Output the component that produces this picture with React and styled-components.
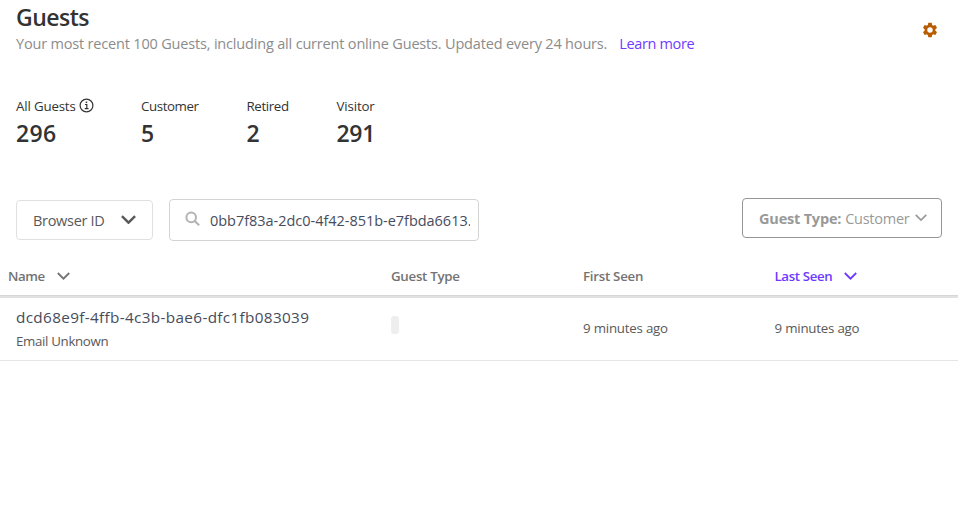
import React from "react";
import styled, { createGlobalStyle } from "styled-components";

const GlobalStyle = createGlobalStyle`
  * { box-sizing: border-box; }
  body {
    margin: 0;
    background: #fff;
    color: #333;
    font-family: "Open Sans", "Noto Sans", sans-serif;
    font-size: 13.3px;
    line-height: 20px;
  }
`;

const Page = styled.main`
  width: 100%;
  min-height: 518px;
  overflow: hidden;
`;

const Header = styled.header`
  display: flex;
  justify-content: space-between;
  padding: 0 19px 0 16px;
  height: 96px;
`;

const Title = styled.h1`
  margin: 0;
  font-size: 23px;
  line-height: 35px;
  font-weight: 600;
  letter-spacing: -0.5px;
`;

const Subtitle = styled.p`
  margin: 0;
  font-size: 14.5px;
  line-height: 18px;
  letter-spacing: -0.18px;
  color: #8c8c8c;
  white-space: nowrap;
`;

const Link = styled.a`
  margin-left: 12px;
  color: #6e3aff;
  letter-spacing: -0.35px;
`;

const SettingsButton = styled.button`
  display: flex;
  align-self: flex-start;
  margin-top: 21px;
  padding: 0;
  border: 0;
  background: none;
  color: #b85c00;
`;

const Stats = styled.section`
  display: grid;
  grid-template-columns: 125px 105.5px 90px auto;
  padding-left: 16px;
  height: 102px;
`;

const StatLabel = styled.div`
  display: flex;
  align-items: center;
  gap: 3px;
  letter-spacing: ${(p) => p.$tracking}px;

  svg { margin-top: -1px; }
`;

const StatValue = styled.div`
  margin-top: 1px;
  font-size: 23px;
  line-height: 32px;
  font-weight: 600;
  letter-spacing: ${(p) => p.$tracking}px;
`;

const Toolbar = styled.section`
  display: flex;
  align-items: flex-start;
  gap: 16px;
  height: 59px;
  padding: 0 16px;
  font-size: 14.5px;
`;

const FieldSelect = styled.div`
  display: flex;
  align-items: center;
  justify-content: space-between;
  width: 137px;
  height: 40px;
  margin-top: 2px;
  padding: 1px 16px 0 16px;
  border: 1px solid #e0e0e0;
  border-radius: 4px;
  color: #595959;
  letter-spacing: -0.3px;

  svg { margin-top: -2px; }
`;

const SearchBox = styled.div`
  display: flex;
  align-items: center;
  width: 310px;
  height: 42px;
  margin-top: 1px;
  padding: 1px 8px 0 15px;
  border: 1px solid #d4d4d4;
  border-radius: 4px;
  color: #474c5c;

  svg { margin-top: -3px; }
`;

const SearchValue = styled.span`
  flex: 1;
  margin-left: 9px;
  overflow: hidden;
  white-space: nowrap;
  letter-spacing: -0.03px;
`;

const TypeFilter = styled.div`
  display: flex;
  align-items: center;
  width: 200px;
  height: 40px;
  margin-left: auto;
  padding: 1px 15px 0 16px;
  border: 1px solid #959595;
  border-radius: 4px;
  color: #999;
  letter-spacing: -0.25px;
  white-space: nowrap;

  strong { margin-right: 4px; letter-spacing: -0.2px; }
  svg { flex: none; margin: -1px 0 0 5px; }
`;

const TableRow = styled.div`
  display: grid;
  grid-template-columns: 391px 192px 191.5px 1fr;
`;

const HeadRow = styled(TableRow)`
  height: 41px;
  padding-top: 9px;
  border-bottom: 2px solid #e1e1e1;
  box-shadow: inset 0 -1px #d6d6d6;
`;

const HeadCell = styled.div`
  display: flex;
  align-items: center;
  gap: 12px;
  height: 20px;
  padding-left: ${(p) => (p.$first ? 8 : 0)}px;
  font-weight: 600;
  letter-spacing: ${(p) => p.$tracking}px;
  color: ${(p) => (p.$active ? "#6e3aff" : "#737373")};
`;

const BodyRow = styled(TableRow)`
  height: 63px;
  border-bottom: 1px solid #e6e6e6;
  color: #595959;
`;

const NameCell = styled.div`
  padding: 9px 0 0 16px;
`;

const GuestId = styled.div`
  font-size: 15.3px;
  line-height: 20px;
  letter-spacing: 0.34px;
  color: #474c5c;
`;

const Email = styled.div`
  margin-top: 4px;
  letter-spacing: -0.34px;
`;

const Tag = styled.span`
  display: block;
  width: 8px;
  height: 18px;
  margin-top: 18px;
  border-radius: 3px;
  background: #eee;
`;

const TimeCell = styled.div`
  padding-top: 20px;
  letter-spacing: -0.21px;
`;

function Chevron({ width = 13, stroke = 1.8 }) {
  return (
    <svg width={width} height={(width * 8) / 13} viewBox="0 0 13 8" fill="none">
      <path d="M.8 1 6.5 6.7 12.2 1" stroke="currentColor" strokeWidth={stroke} />
    </svg>
  );
}

function InfoIcon() {
  return (
    <svg width="15" height="15" viewBox="0 0 15 15" fill="none">
      <circle cx="7.5" cy="7.5" r="6.4" stroke="#333" strokeWidth="1.2" />
      <path d="M6 6.5h1.8v4M5.7 10.6h3.8" stroke="#333" strokeWidth="1.2" />
      <path d="M6.7 3.6h1.5v1.5H6.7z" fill="#333" />
    </svg>
  );
}

function SearchIcon() {
  return (
    <svg width="16" height="16" viewBox="0 0 16 16" fill="none" stroke="#b3b3b3">
      <circle cx="6.2" cy="6.4" r="4.8" strokeWidth="2" />
      <path d="m9.7 10 4.4 4.3" strokeWidth="2.2" />
    </svg>
  );
}

function GearIcon() {
  return (
    <svg width="18" height="18" viewBox="0 0 24 24" fill="currentColor">
      <path d="M19.14 12.94c.04-.3.06-.61.06-.94 0-.32-.02-.64-.07-.94l2.03-1.58a.49.49 0 0 0 .12-.61l-1.92-3.32a.488.488 0 0 0-.59-.22l-2.39.96c-.5-.38-1.03-.7-1.62-.94l-.36-2.54a.484.484 0 0 0-.48-.41h-3.84c-.24 0-.43.17-.47.41l-.36 2.54c-.59.24-1.13.57-1.62.94l-2.39-.96c-.22-.08-.47 0-.59.22L2.74 8.87c-.12.21-.08.47.12.61l2.03 1.58c-.05.3-.09.63-.09.94s.02.64.07.94l-2.03 1.58a.49.49 0 0 0-.12.61l1.92 3.32c.12.22.37.29.59.22l2.39-.96c.5.38 1.03.7 1.62.94l.36 2.54c.05.24.24.41.48.41h3.84c.24 0 .44-.17.47-.41l.36-2.54c.59-.24 1.13-.56 1.62-.94l2.39.96c.22.08.47 0 .59-.22l1.92-3.32c.12-.22.07-.47-.12-.61l-2.01-1.58zM12 15.6A3.6 3.6 0 1 1 12 8.4a3.6 3.6 0 0 1 0 7.2z" />
    </svg>
  );
}

const stats = [
  { label: "All Guests", value: "296", info: true, tracking: -0.17, valueTracking: 0.35 },
  { label: "Customer", value: "5", tracking: -0.4, valueTracking: 0 },
  { label: "Retired", value: "2", tracking: -0.37, valueTracking: 0 },
  { label: "Visitor", value: "291", tracking: -0.15, valueTracking: -0.3 },
];

export default function App() {
  return (
    <Page>
      <GlobalStyle />
      <Header>
        <div>
          <Title>Guests</Title>
          <Subtitle>
            Your most recent 100 Guests, including all current online Guests. Updated every 24 hours.
            <Link>Learn more</Link>
          </Subtitle>
        </div>
        <SettingsButton aria-label="Settings"><GearIcon /></SettingsButton>
      </Header>
      <Stats>
        {stats.map((s) => (
          <div key={s.label}>
            <StatLabel $tracking={s.tracking}>{s.label}{s.info && <InfoIcon />}</StatLabel>
            <StatValue $tracking={s.valueTracking}>{s.value}</StatValue>
          </div>
        ))}
      </Stats>
      <Toolbar>
        <FieldSelect>Browser ID<Chevron width={15} stroke={2.1} /></FieldSelect>
        <SearchBox><SearchIcon /><SearchValue>0bb7f83a-2dc0-4f42-851b-e7fbda6613.</SearchValue></SearchBox>
        <TypeFilter><strong>Guest Type:</strong>Customer<Chevron width={12} /></TypeFilter>
      </Toolbar>
      <HeadRow>
        <HeadCell $first $tracking={-0.4}>Name<Chevron /></HeadCell>
        <HeadCell $tracking={-0.28}>Guest Type</HeadCell>
        <HeadCell $tracking={-0.27}>First Seen</HeadCell>
        <HeadCell $active $tracking={-0.38}>Last Seen<Chevron /></HeadCell>
      </HeadRow>
      <BodyRow>
        <NameCell>
          <GuestId>dcd68e9f-4ffb-4c3b-bae6-dfc1fb083039</GuestId>
          <Email>Email Unknown</Email>
        </NameCell>
        <Tag />
        <TimeCell>9 minutes ago</TimeCell>
        <TimeCell>9 minutes ago</TimeCell>
      </BodyRow>
    </Page>
  );
}
